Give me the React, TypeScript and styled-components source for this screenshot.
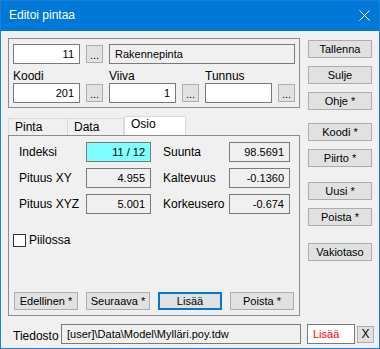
import {Fragment} from "react";
import styled, {createGlobalStyle} from "styled-components";

const GlobalStyle = createGlobalStyle`
  html, body {
    margin: 0;
    padding: 0;
    background: #f0f0f0;
  }
  body {
    font-family: "Liberation Sans", Arial, sans-serif;
    font-size: 11px;
    color: #000;
  }
`;

const Window = styled.div`
  width: 380px;
  height: 349px;
  box-sizing: border-box;
  border: 1px solid #1c7fd4;
  background: #f0f0f0;
  display: flex;
  flex-direction: column;
  overflow: hidden;
`;

const TitleBar = styled.div`
  height: 30px;
  flex: none;
  background: #0078d7;
  color: #fff;
  display: flex;
  align-items: center;
  justify-content: space-between;
  padding: 0 9px 0 8px;
`;

const Title = styled.span`
  font-size: 12px;
  padding-bottom: 2px;
`;

const CloseIcon = styled.svg`
  width: 11px;
  height: 11px;
  margin-bottom: 2px;
`;

const Body = styled.div`
  display: flex;
  flex-direction: column;
`;

const Main = styled.div`
  display: flex;
  gap: 8px;
  padding: 7px 0 0 7px;
`;

const LeftColumn = styled.div`
  width: 292px;
  display: flex;
  flex-direction: column;
`;

const GroupBox = styled.div`
  box-sizing: border-box;
  height: 70px;
  border: 1px solid #8c8c8c;
  padding: 5px 4px 4px 4px;
  display: flex;
  flex-direction: column;
`;

const FieldRow = styled.div`
  display: flex;
  align-items: center;
  gap: 6px;
`;

const LabeledRow = styled.div`
  display: flex;
  gap: 6px;
`;

const LabeledField = styled.div`
  display: flex;
  flex-direction: column;
`;

const FieldLabel = styled.div`
  height: 19px;
  line-height: 13px;
  padding-top: 6px;
  box-sizing: border-box;
  font-size: 12px;
`;

const TextField = styled.div<{ $w: number; $align?: "left" | "right"; $bg?: string; $color?: string }>`
  box-sizing: border-box;
  width: ${p => p.$w}px;
  height: 20px;
  border: 1px solid #7a7a7a;
  background: ${p => p.$bg ?? "#fff"};
  color: ${p => p.$color ?? "#000"};
  text-align: ${p => p.$align ?? "right"};
  line-height: 18px;
  padding: 0 5px;
  white-space: nowrap;
  overflow: hidden;
`;

const Button = styled.div<{ $w?: number; $mt?: number; $default?: boolean }>`
  box-sizing: border-box;
  width: ${p => p.$w ?? 64}px;
  height: 18px;
  margin-top: ${p => p.$mt ?? 0}px;
  background: #e1e1e1;
  border: ${p => p.$default ? "2px solid #0078d7" : "1px solid #adadad"};
  text-align: center;
  line-height: ${p => p.$default ? 14 : 16}px;
  white-space: nowrap;
  flex: none;
`;

const DotButton = styled(Button)`
  width: 17px;
  line-height: 18px;
`;

const TabArea = styled.div`
  margin-top: 8px;
  display: flex;
  flex-direction: column;
`;

const TabStrip = styled.div`
  display: flex;
  align-items: flex-end;
  height: 19px;
`;

const Tab = styled.div<{ $w: number; $active?: boolean }>`
  box-sizing: border-box;
  width: ${p => p.$w}px;
  height: ${p => p.$active ? 19 : 17}px;
  background: ${p => p.$active ? "#fff" : "#f0f0f0"};
  border: 1px solid #d9d9d9;
  border-bottom: none;
  border-left-width: ${p => p.$active ? 1 : 0}px;
  padding-left: 6px;
  line-height: ${p => p.$active ? 15 : 17}px;
  font-size: 12px;

  &:first-child {
    border-left-width: 1px;
  }
`;

const TabPanel = styled.div`
  box-sizing: border-box;
  height: 181px;
  border: 1px solid #8c8c8c;
  padding: 6px 0 5px 4px;
  display: flex;
  flex-direction: column;
`;

const InfoGrid = styled.div`
  margin-left: 6px;
  display: grid;
  grid-template-columns: 67px 65px 12px 66px 61px;
  grid-auto-rows: 20px;
  row-gap: 6px;
  align-items: center;
`;

const InfoLabel = styled.div<{ $col: number }>`
  grid-column: ${p => p.$col};
  font-size: 12px;
`;

const CheckRow = styled.label`
  margin-top: 19px;
  display: flex;
  align-items: center;
  gap: 3px;
  font-size: 12px;
`;

const CheckBox = styled.span`
  box-sizing: border-box;
  width: 13px;
  height: 13px;
  border: 1px solid #333;
  background: #fff;
`;

const PanelButtons = styled.div`
  margin-top: auto;
  margin-left: 1px;
  display: flex;
  gap: 8px;
`;

const SideButtons = styled.div`
  padding-top: 2px;
  display: flex;
  flex-direction: column;
`;

const FileRow = styled.div`
  margin-top: 8px;
  padding-left: 12px;
  display: flex;
  align-items: center;
`;

const FileLabel = styled.div`
  width: 48px;
  padding-top: 4px;
  font-size: 12px;
`;

const FileField = styled(TextField)`
  margin-right: 6px;
`;

const SmallButton = styled(Button)`
  margin-left: 2px;
  height: 17px;
  line-height: 15px;
  font-size: 12px;
`;

const infoRows = [
    {left: "Indeksi", leftValue: "11 / 12", right: "Suunta", rightValue: "98.5691", highlight: true},
    {left: "Pituus XY", leftValue: "4.955", right: "Kaltevuus", rightValue: "-0.1360"},
    {left: "Pituus XYZ", leftValue: "5.001", right: "Korkeusero", rightValue: "-0.674"},
];

const sideButtons = [
    {text: "Tallenna", mt: 0},
    {text: "Sulje", mt: 8},
    {text: "Ohje *", mt: 8},
    {text: "Koodi *", mt: 13},
    {text: "Piirto *", mt: 8},
    {text: "Uusi *", mt: 15},
    {text: "Poista *", mt: 8},
    {text: "Vakiotaso", mt: 17},
];

const App = () => {
    return (
        <>
            <GlobalStyle/>
            <Window>
                <TitleBar>
                    <Title>Editoi pintaa</Title>
                    <CloseIcon viewBox="0 0 11 11">
                        <path d="M0.5 0.5 L10.5 10.5 M10.5 0.5 L0.5 10.5" stroke="#fff" strokeWidth="1"/>
                    </CloseIcon>
                </TitleBar>
                <Body>
                    <Main>
                        <LeftColumn>
                            <GroupBox>
                                <FieldRow>
                                    <TextField $w={67}>11</TextField>
                                    <DotButton>...</DotButton>
                                    <TextField $w={186} $align="left" $bg="#f0f0f0">Rakennepinta</TextField>
                                </FieldRow>
                                <LabeledRow>
                                    {[["Koodi", "201"], ["Viiva", "1"], ["Tunnus", ""]].map(([label, value]) => (
                                        <LabeledField key={label}>
                                            <FieldLabel>{label}</FieldLabel>
                                            <FieldRow>
                                                <TextField $w={67}>{value}</TextField>
                                                <DotButton>...</DotButton>
                                            </FieldRow>
                                        </LabeledField>
                                    ))}
                                </LabeledRow>
                            </GroupBox>
                            <TabArea>
                                <TabStrip>
                                    <Tab $w={60}>Pinta</Tab>
                                    <Tab $w={56}>Data</Tab>
                                    <Tab $w={62} $active>Osio</Tab>
                                </TabStrip>
                                <TabPanel>
                                    <InfoGrid>
                                        {infoRows.map(row => (
                                            <Fragment key={row.left}>
                                                <InfoLabel $col={1}>{row.left}</InfoLabel>
                                                <TextField $w={65} $bg={row.highlight ? "#80ffff" : "#f0f0f0"}>
                                                    {row.leftValue}
                                                </TextField>
                                                <InfoLabel $col={4}>{row.right}</InfoLabel>
                                                <TextField $w={61} $bg="#f0f0f0">{row.rightValue}</TextField>
                                            </Fragment>
                                        ))}
                                    </InfoGrid>
                                    <CheckRow>
                                        <CheckBox/>
                                        Piilossa
                                    </CheckRow>
                                    <PanelButtons>
                                        <Button>Edellinen *</Button>
                                        <Button>Seuraava *</Button>
                                        <Button $default>Lisää</Button>
                                        <Button>Poista *</Button>
                                    </PanelButtons>
                                </TabPanel>
                            </TabArea>
                        </LeftColumn>
                        <SideButtons>
                            {sideButtons.map(b => (
                                <Button key={b.text} $mt={b.mt}>{b.text}</Button>
                            ))}
                        </SideButtons>
                    </Main>
                    <FileRow>
                        <FileLabel>Tiedosto</FileLabel>
                        <FileField $w={240} $align="left" $bg="#f0f0f0">[user]\Data\Model\Mylläri.poy.tdw</FileField>
                        <TextField $w={48} $align="left" $color="#ff0000">Lisää</TextField>
                        <SmallButton $w={17}>X</SmallButton>
                    </FileRow>
                </Body>
            </Window>
        </>
    );
}

export default App;
